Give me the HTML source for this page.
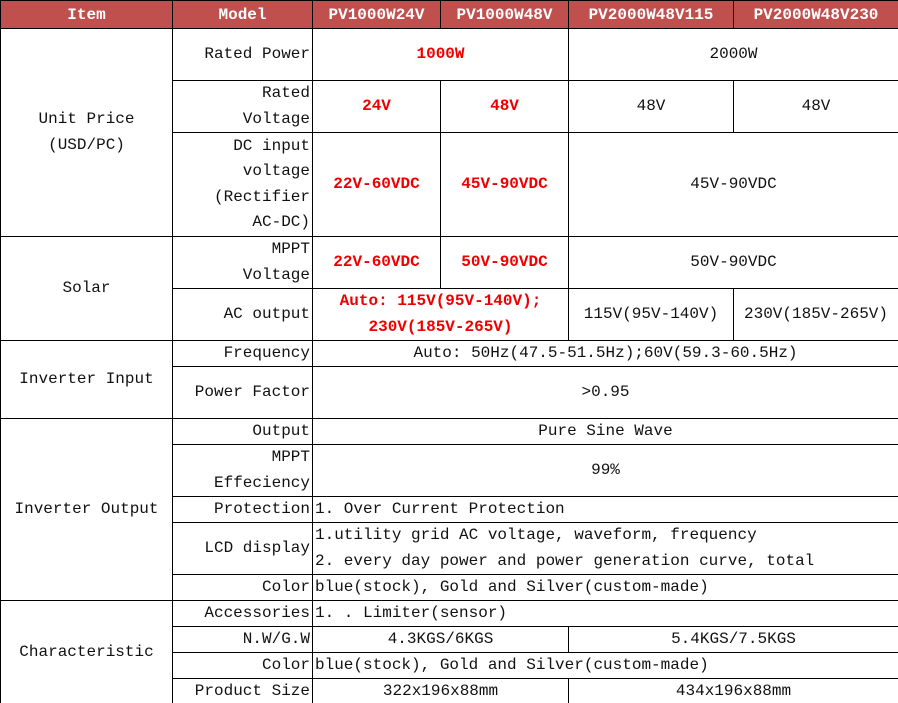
<!DOCTYPE html>
<html><head><meta charset="utf-8"><style>
html,body{margin:0;padding:0;background:#fff;width:898px;height:703px;overflow:hidden}
table{border-collapse:collapse;table-layout:fixed;width:898px;font-family:"Liberation Mono","Noto Serif CJK SC",monospace;font-size:16px;color:#111}
td{border:1px solid #000;padding:0 2px;text-align:center;line-height:25.5px;overflow:hidden;white-space:nowrap}
tr.s td{line-height:23px}
th{background:#C0504D;color:#fff;font-weight:bold;border:1px solid #000;font-size:16px;height:26px;line-height:26px;padding:0}
.r{text-align:right}
.l{text-align:left}
.red{color:#e00;font-weight:bold}
</style></head><body>
<table>
<colgroup><col style="width:172px"><col style="width:140px"><col style="width:128px"><col style="width:128px"><col style="width:165px"><col style="width:165px"></colgroup>
<tr style="height:28px"><th>Item</th><th>Model</th><th>PV1000W24V</th><th>PV1000W48V</th><th>PV2000W48V115</th><th>PV2000W48V230</th></tr>
<tr style="height:52px"><td rowspan="3">Unit Price<br>(USD/PC)</td><td class="r">Rated Power</td><td colspan="2" class="red">1000W</td><td colspan="2">2000W</td></tr>
<tr style="height:52px"><td class="r">Rated<br>Voltage</td><td class="red">24V</td><td class="red">48V</td><td>48V</td><td>48V</td></tr>
<tr style="height:104px"><td class="r">DC input<br>voltage<br>(Rectifier<br>AC-DC)</td><td class="red">22V-60VDC</td><td class="red">45V-90VDC</td><td colspan="2">45V-90VDC</td></tr>
<tr style="height:52px"><td rowspan="2">Solar</td><td class="r">MPPT<br>Voltage</td><td class="red">22V-60VDC</td><td class="red">50V-90VDC</td><td colspan="2">50V-90VDC</td></tr>
<tr style="height:52px"><td class="r">AC output</td><td colspan="2" class="red">Auto: 115V(95V-140V);<br>230V(185V-265V)</td><td>115V(95V-140V)</td><td>230V(185V-265V)</td></tr>
<tr class="s" style="height:26px"><td rowspan="2">Inverter Input</td><td class="r">Frequency</td><td colspan="4">Auto: 50Hz(47.5-51.5Hz);60V(59.3-60.5Hz)</td></tr>
<tr style="height:52px"><td class="r">Power Factor</td><td colspan="4">&gt;0.95</td></tr>
<tr class="s" style="height:26px"><td rowspan="5">Inverter Output</td><td class="r">Output</td><td colspan="4">Pure Sine Wave</td></tr>
<tr style="height:52px"><td class="r">MPPT<br>Effeciency</td><td colspan="4">99%</td></tr>
<tr class="s" style="height:26px"><td class="r">Protection</td><td colspan="4" class="l">1. Over Current Protection</td></tr>
<tr style="height:52px"><td class="r">LCD display</td><td colspan="4" class="l">1.utility grid AC voltage, waveform, frequency<br>2. every day power and power generation curve, total</td></tr>
<tr class="s" style="height:26px"><td class="r">Color</td><td colspan="4" class="l">blue(stock), Gold and Silver(custom-made)</td></tr>
<tr class="s" style="height:26px"><td rowspan="4">Characteristic</td><td class="r">Accessories</td><td colspan="4" class="l">1. . Limiter(sensor)</td></tr>
<tr class="s" style="height:26px"><td class="r">N.W/G.W</td><td colspan="2">4.3KGS/6KGS</td><td colspan="2">5.4KGS/7.5KGS</td></tr>
<tr class="s" style="height:26px"><td class="r">Color</td><td colspan="4" class="l">blue(stock), Gold and Silver(custom-made)</td></tr>
<tr class="s" style="height:26px"><td class="r">Product Size</td><td colspan="2">322x196x88mm</td><td colspan="2">434x196x88mm</td></tr>
</table>
</body></html>
